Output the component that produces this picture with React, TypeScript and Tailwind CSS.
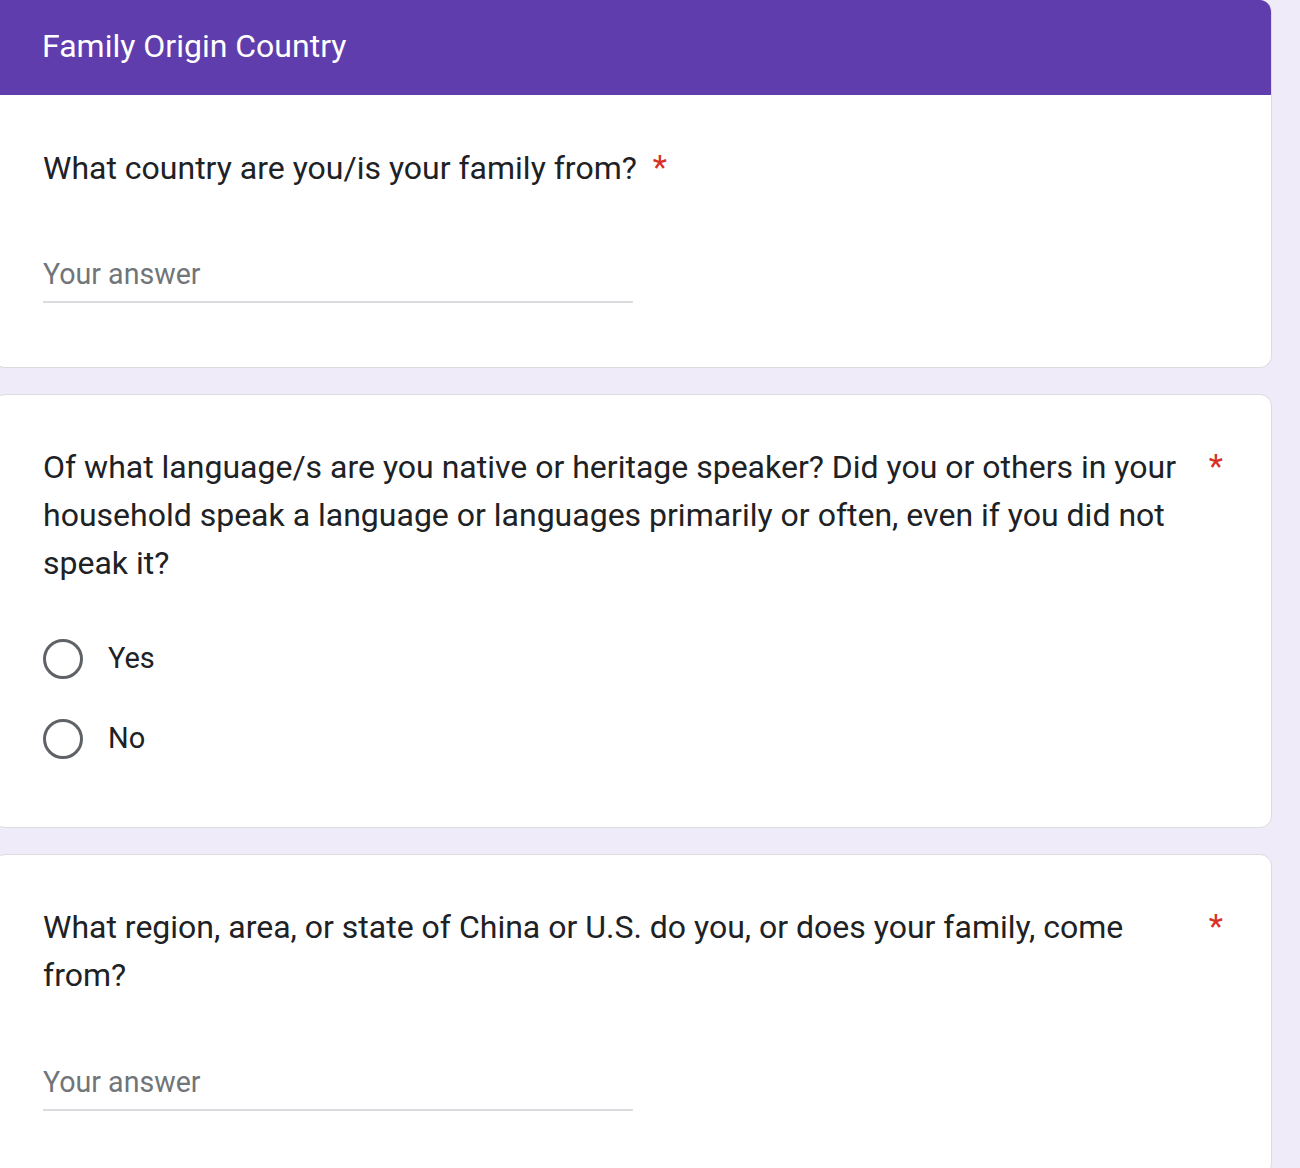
import React from 'react';

const font = { fontFamily: 'Roboto, "Noto Sans", Arial, sans-serif' };

function Asterisk() {
  return <span className="text-[#d93025] text-[33px] leading-[48px] shrink-0 ml-4">*</span>;
}

function Question({ children }: { children: React.ReactNode }) {
  return (
    <div className="flex items-start">
      <div className="text-[#202124] text-[32px] leading-[48px]">{children}</div>
      <Asterisk />
    </div>
  );
}

function AnswerInput() {
  return (
    <div className="w-[590px] border-b-2 border-[#dadce0] pb-[7px]">
      <span className="block text-[#70757a] text-[28.6px] leading-[40px]">Your answer</span>
    </div>
  );
}

function Radio({ label }: { label: string }) {
  return (
    <div className="flex items-center h-[80px]">
      <span className="w-[40px] h-[40px] rounded-full border-[3px] border-[#5f6368] shrink-0" />
      <span className="ml-[25px] text-[#202124] text-[29px]">{label}</span>
    </div>
  );
}

export default function App() {
  return (
    <div className="min-h-[1168px] bg-[#f0ebf8] overflow-hidden" style={font}>
      <div className="w-[1279px] -ml-[7px] flex flex-col gap-[26px]">
        {/* Section header card */}
        <div className="bg-white border border-[#dadce0] border-t-0 rounded-b-[12px] rounded-tr-[12px] overflow-hidden">
          <div className="bg-[#5f3dac] h-[95px] pl-[49px] pt-[26px] -mx-px">
            <h1 className="text-white text-[32px] leading-[40px]">Family Origin Country</h1>
          </div>
          <div className="pl-[49px] pr-[48px] pt-[49px] pb-[64px]">
            <Question>What country are you/is your family from?</Question>
            <div className="mt-[62px]">
              <AnswerInput />
            </div>
          </div>
        </div>

        {/* Language question */}
        <div className="bg-white border border-[#dadce0] rounded-[12px] pl-[49px] pr-[48px] pt-[48px] pb-[48px]">
          <Question>
            Of what language/s are you native or heritage speaker? Did you or others in your household speak a language or languages primarily or often, even if you did not speak it?
          </Question>
          <div className="mt-[32px]">
            <Radio label="Yes" />
            <Radio label="No" />
          </div>
        </div>

        {/* Region question */}
        <div className="bg-white border border-[#dadce0] rounded-[12px] pl-[49px] pr-[48px] pt-[48px] pb-[64px]">
          <Question>
            What region, area, or state of China or U.S. do you, or does your family, come from?
          </Question>
          <div className="mt-[63px]">
            <AnswerInput />
          </div>
        </div>
      </div>
    </div>
  );
}
